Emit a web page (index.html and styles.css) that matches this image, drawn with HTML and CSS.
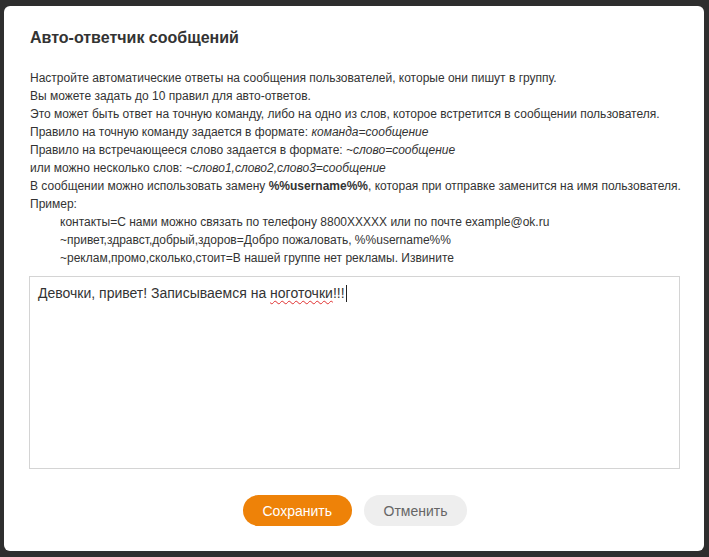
FILE: index.html
```html
<!DOCTYPE html>
<html lang="ru">
<head>
<meta charset="utf-8">
<title>Авто-ответчик сообщений</title>
<link rel="stylesheet" href="styles.css">
</head>
<body>
<div class="modal">
  <h1 class="title">Авто-ответчик сообщений</h1>
  <div class="help">
    <p>Настройте автоматические ответы на сообщения пользователей, которые они пишут в группу.</p>
    <p>Вы можете задать до 10 правил для авто-ответов.</p>
    <p>Это может быть ответ на точную команду, либо на одно из слов, которое встретится в сообщении пользователя.</p>
    <p>Правило на точную команду задается в формате: <i>команда=сообщение</i></p>
    <p>Правило на встречающееся слово задается в формате: <i>~слово=сообщение</i></p>
    <p>или можно несколько слов: <i>~слово1,слово2,слово3=сообщение</i></p>
    <p>В сообщении можно использовать замену <b>%%username%%</b>, которая при отправке заменится на имя пользователя.</p>
    <p>Пример:</p>
    <p class="ex">контакты=С нами можно связать по телефону 8800XXXXX или по почте example@ok.ru</p>
    <p class="ex">~привет,здравст,добрый,здоров=Добро пожаловать, %%username%%</p>
    <p class="ex">~реклам,промо,сколько,стоит=В нашей группе нет рекламы. Извините</p>
  </div>
  <div class="editor">Девочки, привет! Записываемся на <span class="misspelled">ноготочки</span>!!!<span class="caret"></span></div>
  <div class="actions">
    <button class="btn btn-primary">Сохранить</button>
    <button class="btn btn-secondary">Отменить</button>
  </div>
</div>
</body>
</html>
```
FILE: styles.css
```css
html, body {
  margin: 0;
  padding: 0;
  background: #2e2e2e;
}
body {
  padding: 6px 5px 6px 4px;
  font-family: "Liberation Sans", Arial, sans-serif;
  color: #333;
}
.modal {
  width: 700px;
  height: 545px;
  box-sizing: border-box;
  background: #fff;
  border-radius: 6px;
  padding: 22px 24px 0 25px;
  display: flex;
  flex-direction: column;
}
.title {
  margin: 0 0 21px 1px;
  font-size: 16px;
  line-height: 20px;
  font-weight: bold;
  color: #333;
}
.help {
  font-size: 12px;
  line-height: 18px;
  color: #333;
  margin-left: 1px;
}
.help p {
  margin: 0;
  white-space: nowrap;
}
.help .ex {
  padding-left: 30px;
}
.editor {
  margin-top: 9px;
  height: 193px;
  box-sizing: border-box;
  border: 1px solid #d4d4d4;
  padding: 7px 8px;
  font-size: 14px;
  line-height: 18px;
  color: #333;
}
.misspelled {
  text-decoration: underline wavy #e03030;
  text-decoration-thickness: 1px;
  text-underline-offset: 2px;
}
.caret {
  display: inline-block;
  width: 1px;
  height: 17px;
  background: #222;
  vertical-align: -4px;
  margin-left: 1px;
}
.actions {
  margin-top: 26px;
  display: flex;
  justify-content: center;
  gap: 12px;
}
.btn {
  height: 31px;
  border: none;
  border-radius: 16px;
  font-family: "Liberation Sans", Arial, sans-serif;
  font-size: 14px;
  padding: 0 20px;
  cursor: pointer;
}
.btn-primary {
  width: 109px;
  background: #ee8208;
  color: #fff;
}
.btn-secondary {
  width: 103px;
  background: #eeeeee;
  color: #666;
}
```
